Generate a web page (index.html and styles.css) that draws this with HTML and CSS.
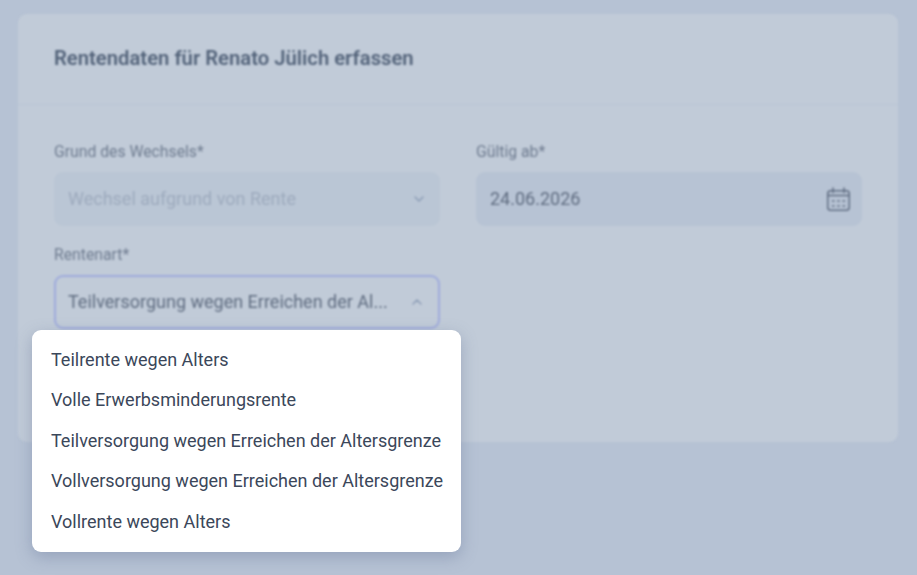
FILE: index.html
```html
<!DOCTYPE html>
<html lang="de">
<head>
    <meta charset="UTF-8">
    <meta name="viewport" content="width=device-width, initial-scale=1.0">
    <title>Rentendaten</title>
    <link rel="stylesheet" href="styles.css">
</head>
<body>
    <div class="page">
        <div class="card">
            <h2 class="card-title">Rentendaten für Renato Jülich erfassen</h2>
            <div class="form">
                <div class="field">
                    <label>Grund des Wechsels*</label>
                    <div class="input disabled">
                        <span class="value">Wechsel aufgrund von Rente</span>
                        <svg class="chevron" width="12" height="12" viewBox="0 0 12 12"><path d="M2 4l4 4 4-4" fill="none" stroke="currentColor" stroke-width="1.5" stroke-linecap="round" stroke-linejoin="round"/></svg>
                    </div>
                </div>
                <div class="field">
                    <label>Gültig ab*</label>
                    <div class="input">
                        <span class="value">24.06.2026</span>
                        <svg class="calendar" width="24" height="24" viewBox="0 0 24 24" fill="none" stroke="currentColor" stroke-width="1.5" stroke-linecap="round">
                            <rect x="1.75" y="3.75" width="21.5" height="19.5" rx="3"/>
                            <path d="M1.75 8.5h21.5M7 1v4.5M18 1v4.5"/>
                            <path d="M6.5 14h1.5M11.75 14h1.5M17 14h1.5M6.5 19h1.5M11.75 19h1.5M17 19h1.5"/>
                        </svg>
                    </div>
                </div>
                <div class="field">
                    <label>Rentenart*</label>
                    <div class="input focused">
                        <span class="value">Teilversorgung wegen Erreichen der Al...</span>
                        <svg class="chevron" width="12" height="12" viewBox="0 0 12 12"><path d="M2 8l4-4 4 4" fill="none" stroke="currentColor" stroke-width="1.5" stroke-linecap="round" stroke-linejoin="round"/></svg>
                    </div>
                </div>
            </div>
        </div>
    </div>

    <ul class="dropdown">
        <li>Teilrente wegen Alters</li>
        <li>Volle Erwerbsminderungsrente</li>
        <li>Teilversorgung wegen Erreichen der Altersgrenze</li>
        <li>Vollversorgung wegen Erreichen der Altersgrenze</li>
        <li>Vollrente wegen Alters</li>
    </ul>
</body>
</html>
```

FILE: styles.css
```css
html, body {
    margin: 0;
    height: 100%;
    overflow: hidden;
    background-color: #b6c2d4;
}
body {
    font-family: Roboto, "Liberation Sans", sans-serif;
    position: relative;
}
.page {
    padding: 14px 19px 0 18px;
    filter: blur(1px);
}
.card {
    background-color: #c1cbd8;
    border-radius: 9px;
    height: 428px;
}
.card-title {
    box-sizing: border-box;
    margin: 0;
    padding: 32px 36px 0;
    height: 91px;
    border-bottom: 1px solid #b9c5d4;
    font-size: 20.25px;
    line-height: 24px;
    font-weight: 600;
    color: #53637a;
}
.form {
    display: grid;
    grid-template-columns: 386px 386px;
    column-gap: 36px;
    row-gap: 19px;
    padding: 37px 36px 0;
}
.field label {
    display: block;
    font-size: 15.75px;
    line-height: 20px;
    color: #6f7c90;
    margin-bottom: 10px;
}
.input {
    display: flex;
    align-items: center;
    justify-content: space-between;
    box-sizing: border-box;
    height: 54px;
    padding: 0 12px 0 14px;
    background-color: #b7c3d4;
    border-radius: 9px;
    font-size: 18px;
    color: #5f6c80;
}
.input .value {
    margin-bottom: 2px;
    white-space: nowrap;
}
.input.disabled {
    background-color: #bac6d5;
    color: #9daabd;
    padding-right: 15px;
}
.input.focused {
    background-color: #c1cbd8;
    border: 2px solid #9fabdc;
    padding: 0 15px 0 12px;
}
.chevron {
    flex: none;
    margin-left: 22px;
    color: #8d9db6;
}
.calendar {
    flex: none;
    color: #5f6c81;
}
.dropdown {
    position: absolute;
    left: 32px;
    top: 330px;
    width: 429px;
    box-sizing: border-box;
    margin: 0;
    padding: 9.75px 0 9.75px;
    list-style: none;
    background-color: #fff;
    border-radius: 9px;
    box-shadow: 0 5px 16px rgba(100, 116, 150, 0.4);
}
.dropdown li {
    padding: 0 19px;
    font-size: 18px;
    line-height: 40.5px;
    white-space: nowrap;
    color: #3b475a;
}
```
